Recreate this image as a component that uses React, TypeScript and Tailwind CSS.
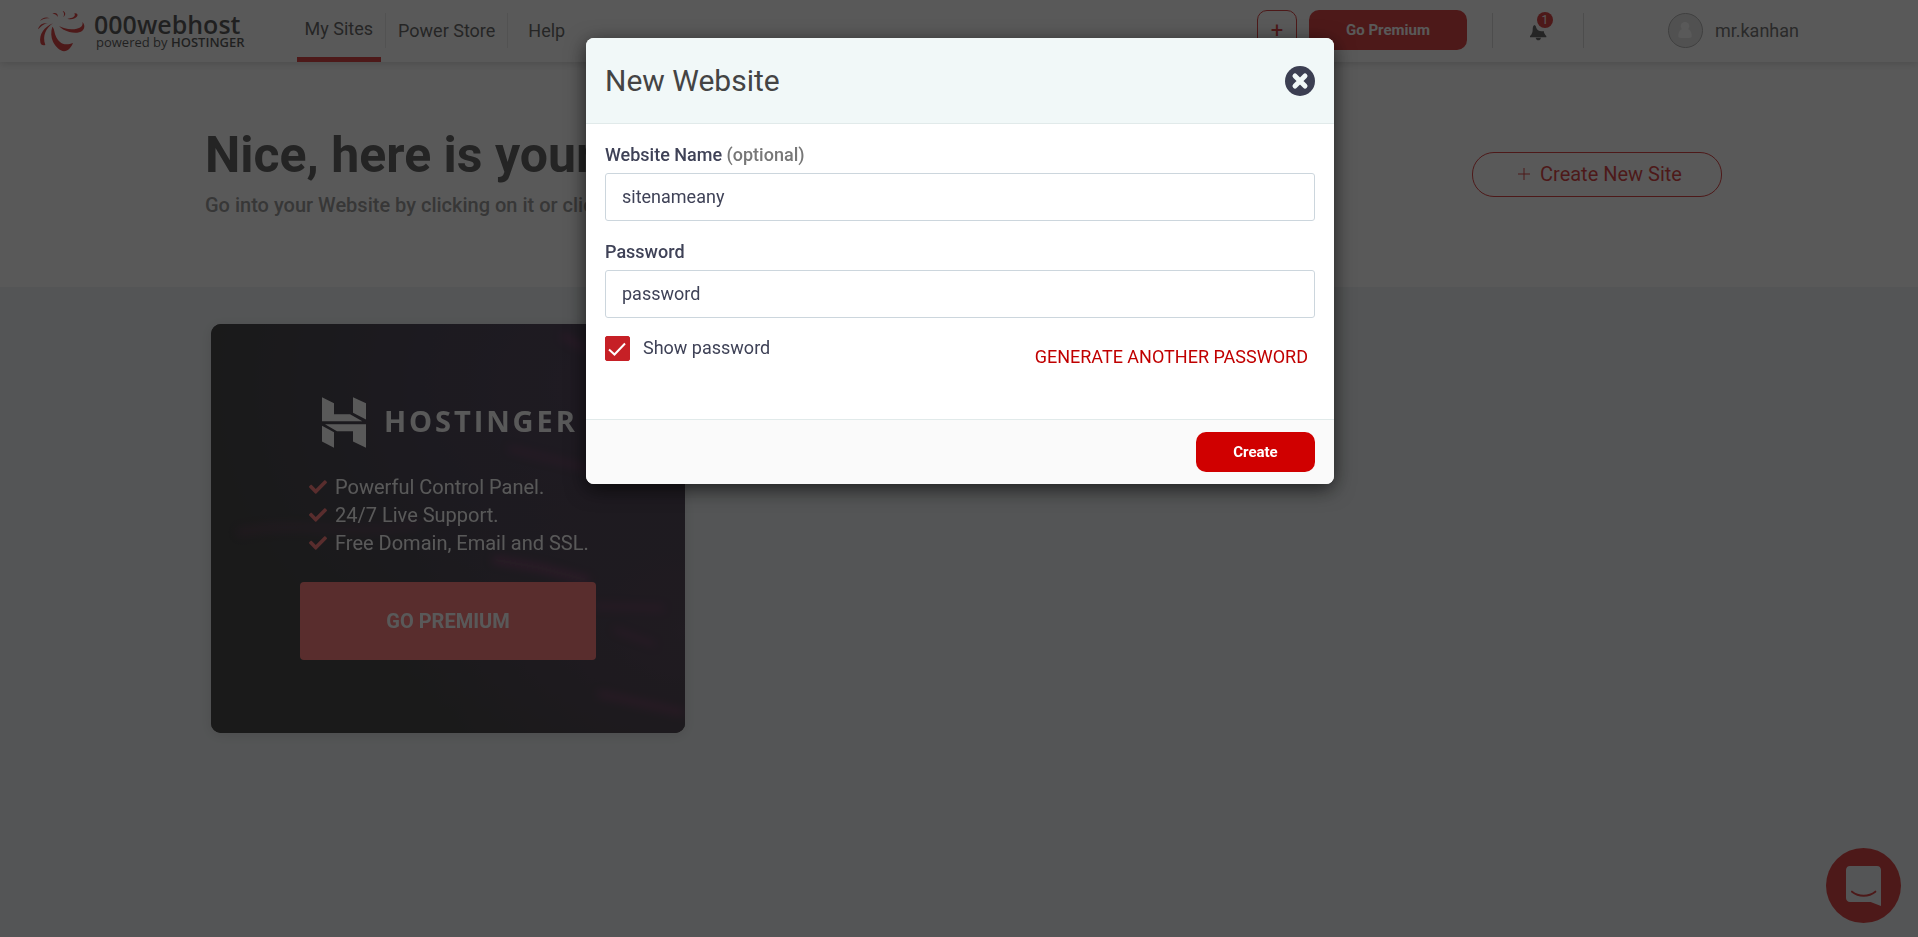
import { useState } from "react";
import { FaCheck } from "react-icons/fa";

const perks = ["Powerful Control Panel.", "24/7 Live Support.", "Free Domain, Email and SSL."];

function Swirl() {
  return (
    <svg viewBox="48 24 150 132" className="h-[44px] w-[50px] shrink-0" fill="#d00000" aria-hidden="true">
      <path d="M117 75C130 83 152 87 170 83C184 80 190 73 187 63C195 70 195 82 187 89C179 96 163 97 148 93C134 89 123 83 117 75Z" />
      <path d="M97 77C103 82 103 94 107 104C114 123 131 137 159 126C153 140 145 149 132 151C120 149 106 137 99 122C93 109 92 92 97 77Z" />
      <path d="M99 67C79 81 66 103 76 132C68 134 62 132 61 124C57 101 72 78 99 67Z" />
      <path d="M84 66C70 68 62 78 54 85C57 73 68 64 84 66Z" />
      <path d="M90 53C79 50 70 54 60 60C66 50 80 46 90 53Z" />
      <path d="M113 48C110 40 104 39 97 38C106 33 115 38 113 48Z" />
      <path d="M130 48C134 41 132 34 128 30C137 32 139 42 130 48Z" />
      <path d="M142 53C157 52 169 47 163 37C171 36 174 40 172 45C168 53 154 57 142 53Z" />
    </svg>
  );
}

function HostingerMark() {
  return (
    <svg viewBox="0 0 132 152" className="h-[51px] w-[44px] shrink-0" fill="#fff" aria-hidden="true">
      <path d="M0 0L36 18V51H84L121 72H0Z" />
      <path d="M93 0L132 18V67L93 47Z" />
      <path d="M9 81H132V152L93 133V102H45Z" />
      <path d="M0 86L36 105V152L0 133Z" />
    </svg>
  );
}

function CardBackdrop() {
  return (
    <svg
      viewBox="0 0 474 409"
      preserveAspectRatio="none"
      className="absolute inset-0 h-full w-full"
      aria-hidden="true"
    >
      <defs>
        <radialGradient id="violet" cx="0.8" cy="0.15" r="0.85">
          <stop offset="0" stopColor="#1a0826" />
          <stop offset="0.45" stopColor="#0e071c" />
          <stop offset="1" stopColor="#040404" />
        </radialGradient>
        <radialGradient id="plum" cx="1" cy="0.75" r="0.6">
          <stop offset="0" stopColor="#1c0820" />
          <stop offset="1" stopColor="#1c0820" stopOpacity="0" />
        </radialGradient>
        <filter id="soft" x="-50%" y="-200%" width="200%" height="500%">
          <feGaussianBlur stdDeviation="4" />
        </filter>
      </defs>
      <rect width="474" height="409" fill="url(#violet)" />
      <rect width="474" height="409" fill="url(#plum)" />
      <g filter="url(#soft)" fill="none" stroke="#6a0a48" strokeLinecap="round">
        <path d="M285 236L330 244L375 256" strokeWidth="7" opacity="0.7" />
        <path d="M300 125L380 145" strokeWidth="5" opacity="0.5" />
        <path d="M30 208C90 195 150 215 205 200" strokeWidth="8" opacity="0.25" />
        <path d="M385 282L450 284" strokeWidth="5" opacity="0.5" />
        <path d="M405 306L442 320" strokeWidth="4" opacity="0.6" />
        <path d="M390 370L470 388" strokeWidth="7" opacity="0.5" />
        <path d="M353 12L372 24" strokeWidth="5" opacity="0.7" />
      </g>
    </svg>
  );
}

function Header() {
  return (
    <header className="relative flex h-[62px] items-center bg-white pr-[119px] pl-[36px] shadow-[0_2px_8px_rgba(0,0,0,0.2)]">
      <a href="#home" className="flex items-center gap-2">
        <Swirl />
        <span className="flex flex-col font-['Open_Sans',sans-serif] text-[#1c1c1c]">
          <span className="text-[25px]/[22px] font-semibold">000webhost</span>
          <span className="pl-[2px] text-[13px]/[14px]">
            powered by <b className="font-semibold">HOSTINGER</b>
          </span>
        </span>
      </a>
      <nav className="ml-[52px] flex h-full items-center text-[18px]">
        <a href="#sites" className="mr-1 flex h-full items-center border-b-[5px] border-[#d00000] px-2">
          My Sites
        </a>
        <a href="#store" className="mb-[2px] flex h-[35px] items-center border-x border-[#e2e2e2] px-3">
          Power Store
        </a>
        <a href="#help" className="mb-[2px] px-5">
          Help
        </a>
      </nav>
      <div className="mb-[2px] ml-auto flex items-center">
        <button
          type="button"
          aria-label="Add site"
          className="flex size-[40px] items-center justify-center rounded-[10px] border border-[#d00000] text-[22px] text-[#d00000]"
        >
          +
        </button>
        <button
          type="button"
          className="ml-3 h-[40px] w-[158px] rounded-[10px] bg-[#d00000] text-[15px] font-bold text-white"
        >
          Go Premium
        </button>
        <span className="ml-[25px] h-[35px] border-l border-[#d0d0d0]" />
        <button type="button" aria-label="Notifications" className="relative mx-[36px] h-[35px] w-[18px]">
          <svg viewBox="0 0 54 51" className="mt-[4px] h-[17px] w-[18px]" fill="#333" aria-hidden="true">
            <path d="M16 3C20 4 21 8 22 12C26 20 34 24 44 21C45 28 48 32 52 36V40H3V36C9 31 11 24 11 18C11 10 12 5 16 3Z" />
            <path d="M20 41H36C35 46 32 49 28 49C24 49 21 46 20 41Z" />
          </svg>
          <span className="absolute -top-px left-[8px] flex size-4 items-center justify-center rounded-full bg-[#d00000] text-[12px]/[16px] text-white">
            1
          </span>
        </button>
        <span className="h-[35px] border-l border-[#d0d0d0]" />
        <a href="#account" className="ml-[84px] flex items-center gap-3 text-[18px] text-[#444]">
          <span className="flex size-[35px] items-center justify-center rounded-full border border-[#999] bg-[#e0e0e0]">
            <svg viewBox="0 0 40 46" className="h-[16px] w-[14px]" fill="#fff" aria-hidden="true">
              <circle cx="20" cy="12" r="12" />
              <path d="M10 21H30C36 25 40 32 39 42C38 45 35 46 32 46H8C5 46 2 45 1 42C0 32 4 25 10 21Z" />
            </svg>
          </span>
          mr.kanhan
        </a>
      </div>
    </header>
  );
}

function PremiumCard() {
  return (
    <article className="relative w-[474px] overflow-hidden rounded-[10px] bg-black text-white shadow-[0_2px_12px_rgba(0,0,0,0.15)]">
      <CardBackdrop />
      <div className="relative flex flex-col px-[89px] pt-[73px] pb-[73px]">
        <div className="flex items-center gap-[18px] pl-[22px]">
          <HostingerMark />
          <span className="pb-[4px] font-['Open_Sans',sans-serif] text-[29px] font-bold tracking-widest">
            HOSTINGER
          </span>
        </div>
        <ul className="mt-[25px] pl-[9px] text-[20px]/[28px] whitespace-nowrap">
          {perks.map((perk) => (
            <li key={perk} className="flex items-center gap-2">
              <FaCheck className="size-[18px] shrink-0 text-[#ff5050]" />
              {perk}
            </li>
          ))}
        </ul>
        <button type="button" className="mt-[25px] h-[78px] rounded bg-[#ff5050] text-[20px] font-bold">
          GO PREMIUM
        </button>
      </div>
    </article>
  );
}

function NewWebsiteDialog() {
  const [name, setName] = useState("sitenameany");
  const [password, setPassword] = useState("password");
  const [visible, setVisible] = useState(true);

  return (
    <section
      role="dialog"
      aria-modal="true"
      aria-labelledby="dialog-title"
      className="w-[748px] overflow-hidden rounded-lg bg-white text-[18px] text-[#3f4257] shadow-[0_5px_20px_rgba(0,0,0,0.65)]"
    >
      <header className="flex h-[86px] items-center justify-between border-b border-[#e1eaea] bg-[#f1f8f8] px-[19px]">
        <h2 id="dialog-title" className="text-[30px] text-[#444]">
          New Website
        </h2>
        <button
          type="button"
          aria-label="Close"
          className="flex size-[30px] items-center justify-center rounded-full bg-[#3c3f52] text-[#f1f8f8]"
        >
          <svg viewBox="0 0 30 30" className="size-[30px]" stroke="currentColor" strokeWidth="5" strokeLinecap="round" aria-hidden="true">
            <path d="M10 10L20 20M20 10L10 20" />
          </svg>
        </button>
      </header>
      <form onSubmit={(e) => e.preventDefault()}>
        <div className="flex flex-col px-[19px] pt-[17px]">
          <label htmlFor="site-name" className="mb-[5px] leading-[27px] font-medium">
            Website Name <span className="text-[#777]">(optional)</span>
          </label>
          <input
            id="site-name"
            type="text"
            value={name}
            onChange={(e) => setName(e.target.value)}
            className="h-[48px] rounded-[3px] border border-[#ccd6dd] px-4 pb-[2px] outline-none"
          />
          <label htmlFor="site-password" className="mt-[17px] mb-[5px] leading-[27px] font-medium">
            Password
          </label>
          <input
            id="site-password"
            type={visible ? "text" : "password"}
            value={password}
            onChange={(e) => setPassword(e.target.value)}
            className="h-[48px] rounded-[3px] border border-[#ccd6dd] px-4 pb-[2px] outline-none"
          />
          <div className="flex items-start justify-between pt-[17px] pb-[50px]">
            <label className="flex items-center gap-[13px] leading-[26px]">
              <span className="relative flex size-[25px] items-center justify-center">
                <input
                  type="checkbox"
                  checked={visible}
                  onChange={(e) => setVisible(e.target.checked)}
                  className="size-full appearance-none rounded-[2px] border border-[#c62026] checked:bg-[#c62026]"
                />
                <svg
                  viewBox="0 0 25 25"
                  className="pointer-events-none absolute inset-0"
                  fill="none"
                  stroke="#fff"
                  strokeWidth="2"
                  aria-hidden="true"
                >
                  <path d="M4 13.500L9.500 18.500L20 7.500" />
                </svg>
              </span>
              Show password
            </label>
            <button type="button" className="mt-[10px] mr-[7px] leading-[24px] text-[#c00000]">
              GENERATE ANOTHER PASSWORD
            </button>
          </div>
        </div>
        <footer className="flex justify-end border-t border-[#e1eaea] bg-[#fafafa] px-[19px] py-3">
          <button type="submit" className="h-[40px] w-[119px] rounded-[10px] bg-[#d00000] text-[15px] font-bold text-white">
            Create
          </button>
        </footer>
      </form>
    </section>
  );
}

export default function App() {
  return (
    <div className="min-h-screen bg-[#eaeff2] font-[Roboto,sans-serif] text-[#333]">
      <Header />
      <main>
        <section className="flex items-start justify-between bg-white pt-[63px] pr-[196px] pb-[68px] pl-[205px]">
          <div>
            <h1 className="text-[50px]/[60px] font-bold text-[#2e2e2e]">Nice, here is your</h1>
            <p className="mt-[7px] text-[20px]/[27px] font-medium text-[#777]">
              Go into your Website by clicking on it or click
            </p>
          </div>
          <button
            type="button"
            className="mt-[27px] flex h-[45px] w-[250px] items-center justify-center gap-[10px] rounded-[22px] border border-[#d00000] pb-[2px] pl-[6px] text-[20px] text-[#d00000]"
          >
            <svg viewBox="0 0 12 12" className="size-3" stroke="currentColor" aria-hidden="true">
              <path d="M6 0V12M0 6H12" />
            </svg>
            Create New Site
          </button>
        </section>
        <section className="pt-[37px] pb-12 pl-[211px]">
          <PremiumCard />
        </section>
      </main>
      <button
        type="button"
        aria-label="Open chat"
        className="fixed right-[17px] bottom-[14px] flex size-[75px] items-center justify-center rounded-full bg-[#d00000]"
      >
        <svg viewBox="0 0 105 120" className="h-[40px] w-[35px]" aria-hidden="true">
          <path d="M12 0H93C100 0 105 5 105 12V120L74 108H12C5 108 0 103 0 96V12C0 5 5 0 12 0Z" fill="#eaeff2" />
          <path d="M18 77C38 93 68 93 88 77" fill="none" stroke="#d00000" strokeWidth="6" strokeLinecap="round" />
        </svg>
      </button>
      <div className="fixed inset-0 flex items-start justify-center bg-[#222]/75 pt-[38px] pl-[2px]">
        <NewWebsiteDialog />
      </div>
    </div>
  );
}
